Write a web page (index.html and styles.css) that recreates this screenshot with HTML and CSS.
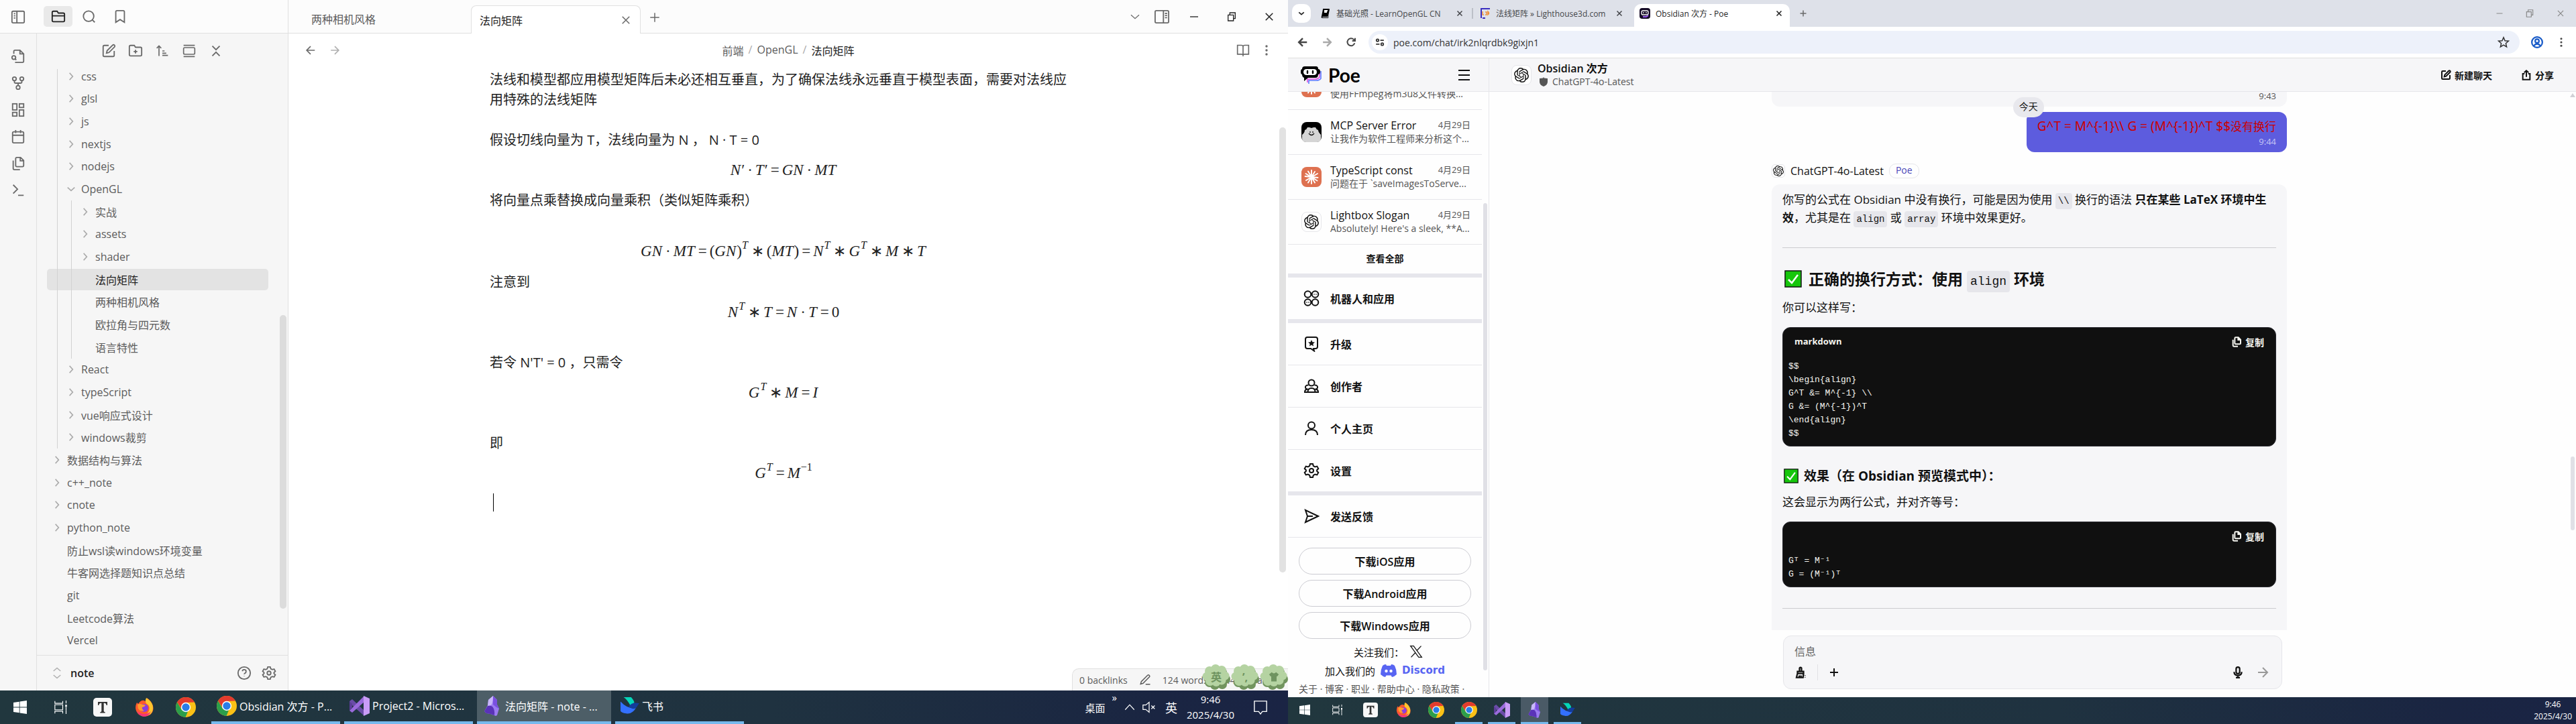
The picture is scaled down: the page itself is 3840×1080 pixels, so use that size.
FILE: index.html
```html
<!DOCTYPE html>
<html lang="zh-CN">
<head>
<meta charset="utf-8">
<title>法向矩阵 - note</title>
<link rel="stylesheet" href="styles.css">
</head>
<body>
<svg class="sprite" aria-hidden="true">
  <symbol id="i-panel-l" viewBox="0 0 24 24"><rect x="2" y="3" width="20" height="19" rx="2"/><path d="M10 3v19M5 7h2.500M5 10.500h2.500M5 14h2.500"/></symbol>
  <symbol id="i-panel-r" viewBox="0 0 24 24"><rect x="1" y="2" width="22" height="20" rx="2"/><path d="M14.500 2v20M17 6.500h3.500M17 10h3.500M17 13.500h3.500"/></symbol>
  <symbol id="i-folder" viewBox="0 0 24 24"><path d="M20 20a2 2 0 0 0 2-2V8a2 2 0 0 0-2-2h-8l-2-3H4a2 2 0 0 0-2 2v13a2 2 0 0 0 2 2ZM2 10.500h20"/></symbol>
  <symbol id="i-search" viewBox="0 0 24 24"><circle cx="11" cy="11" r="8.500"/><path d="m21 21-4-4"/></symbol>
  <symbol id="i-bookmark" viewBox="0 0 24 24"><path d="m19 21-7-4.500L5 21V4a2 2 0 0 1 2-2h10a2 2 0 0 1 2 2Z"/></symbol>
  <symbol id="i-filesearch" viewBox="0 0 24 24"><path d="M5 8V4a2 2 0 0 1 2-2h8l6 6v12a2 2 0 0 1-2 2H7M15 2v6h6"/><circle cx="5" cy="14" r="3"/><path d="m9 18-2-2"/></symbol>
  <symbol id="i-graph" viewBox="0 0 24 24"><circle cx="6" cy="5" r="3"/><circle cx="18" cy="5" r="3"/><circle cx="12" cy="19" r="3"/><path d="M6 8v2q0 2 2 2h8q2 0 2-2V8M12 12v4"/></symbol>
  <symbol id="i-grid" viewBox="0 0 24 24"><rect x="3" y="2" width="7" height="10"/><rect x="14" y="2" width="7" height="6"/><rect x="14" y="12" width="7" height="10"/><rect x="3" y="16" width="7" height="6"/></symbol>
  <symbol id="i-cal" viewBox="0 0 24 24"><rect x="3" y="4" width="18" height="18" rx="2"/><path d="M8 1v5M16 1v5M3 9.500h18"/></symbol>
  <symbol id="i-copy" viewBox="0 0 24 24"><path d="M16 2h-6a2 2 0 0 0-2 2v11a2 2 0 0 0 2 2h9a2 2 0 0 0 2-2V7ZM15.500 2v5.500H21M4 7v13a2 2 0 0 0 2 2h9"/></symbol>
  <symbol id="i-term" viewBox="0 0 24 24"><path d="m4 17 7-7-7-7M12 20h9"/></symbol>
  <symbol id="i-edit" viewBox="0 0 24 24"><path d="M12 3H5a2 2 0 0 0-2 2v14a2 2 0 0 0 2 2h14a2 2 0 0 0 2-2v-7"/><path d="M18.400 2.600a2.100 2.100 0 0 1 3 3L12.500 14.500l-4 1 1-4Z"/></symbol>
  <symbol id="i-foldplus" viewBox="0 0 24 24"><path d="M20 20a2 2 0 0 0 2-2V8a2 2 0 0 0-2-2h-8l-2-3H4a2 2 0 0 0-2 2v13a2 2 0 0 0 2 2ZM12 10v6M9 13h6"/></symbol>
  <symbol id="i-sort" viewBox="0 0 24 24"><path d="m2 7 4-4 4 4M6 3v18M12 12h4M12 16h7M12 20h10"/></symbol>
  <symbol id="i-gallery" viewBox="0 0 24 24"><path d="M2 2h20M2 22h20"/><rect x="2" y="6" width="20" height="12" rx="2"/></symbol>
  <symbol id="i-collapse" viewBox="0 0 24 24"><path d="m6 20 6-6 6 6M6 4l6 6 6-6"/></symbol>
  <symbol id="i-chev" viewBox="0 0 24 24"><path d="m8 3 8 9-8 9"/></symbol>
  <symbol id="i-down" viewBox="0 0 24 24"><path d="m3 8 9 8 9-8"/></symbol>
  <symbol id="i-updown" viewBox="0 0 24 24"><path d="m5 16 7 6 7-6M5 8l7-6 7 6"/></symbol>
  <symbol id="i-help" viewBox="0 0 24 24"><circle cx="12" cy="12" r="10"/><path d="M9 9a3 3 0 0 1 6 1c0 2-3 2.500-3 4M12 17v.500"/></symbol>
  <symbol id="i-gear" viewBox="0 0 24 24"><path d="M10 2h4l.8 3 2.500 1.400 3-.8 2 3.400-2.200 2.200v1.600l2.200 2.200-2 3.400-3-.8-2.500 1.400-.8 3h-4l-.8-3-2.500-1.400-3 .8-2-3.400 2.200-2.200v-1.600L1.700 9l2-3.400 3 .8L9.200 5Z"/><circle cx="12" cy="12" r="3"/></symbol>
  <symbol id="i-left" viewBox="0 0 24 24"><path d="m12 19-7-7 7-7M19.500 12H5"/></symbol>
  <symbol id="i-right" viewBox="0 0 24 24"><path d="m12 5 7 7-7 7M5 12h14"/></symbol>
  <symbol id="i-x" viewBox="0 0 24 24"><path d="M5 5l14 14M19 5 5 19"/></symbol>
  <symbol id="i-plus" viewBox="0 0 24 24"><path d="M12 3v18M3 12h18"/></symbol>
  <symbol id="i-min" viewBox="0 0 24 24"><path d="M3 12h18"/></symbol>
  <symbol id="i-restore" viewBox="0 0 24 24"><path d="M4 8h12v13H4ZM8 8V3h12v13h-4"/></symbol>
  <symbol id="i-book" viewBox="0 0 24 24"><path d="M12 5v16M2 3h7a3 3 0 0 1 3 2 3 3 0 0 1 3-2h7v16h-7a3 3 0 0 0-3 2 3 3 0 0 0-3-2H2Z"/></symbol>
  <symbol id="i-dots" viewBox="0 0 24 24"><g fill="currentColor" stroke="none"><circle cx="12" cy="4" r="2.300"/><circle cx="12" cy="12" r="2.300"/><circle cx="12" cy="20" r="2.300"/></g></symbol>
  <symbol id="i-pencil" viewBox="0 0 24 24"><path d="M13 21h9M17 3a2.500 2.500 0 0 1 3.500 3.500L8 19l-5 1.500L4.500 15.500Z"/></symbol>
  <symbol id="i-win" viewBox="0 0 24 24"><path fill="#fff" stroke="none" d="M0 3.500 10.500 2v9.500H0ZM11.500 1.800 24 0v11.500H11.500ZM0 12.500h10.500V22L0 20.500ZM11.500 12.500H24V24l-12.500-1.800Z"/></symbol>
  <symbol id="i-task" viewBox="0 0 24 24"><path stroke="#fff" fill="none" stroke-width="1.400" d="M1 1v4h14V1M1 7.500h14v9H1ZM1 23v-4h14v4M21 0v5M21 17v7"/><path fill="#fff" stroke="none" d="M19.500 7.500h3v4h-3zM20.300 12h1.400v5h-1.400z"/></symbol>
  <symbol id="i-typora" viewBox="0 0 28 28"><rect x="0" y="0" width="28" height="28" rx="5" fill="#f7f7f7"/><path stroke="none" fill="#333" d="M7 6h14v5h-1.300q-.7-3.200-3-3.200h-1v12q0 1.400 2 1.400V22.500h-7.400v-1.300q2 0 2-1.400v-12h-1q-2.300 0-3 3.200H7Z"/></symbol>
  <symbol id="i-fox" viewBox="0 0 28 28"><path fill="#ff5a2c" d="M3 7q1 1 2 2 4-6 9-5 2 2 5 1Q19 2 18 0q7 5 9 12 2 8-4 13-9 6-17 0Q-2 17 3 7Z"/><path fill="#ffc52e" d="M17 0q7 4 9.500 11 2 9-4 14-6 3-9 1 9-3 8-12-1-4-4-5-3-3-.5-9Z"/><circle cx="14" cy="15" r="6" fill="#8a3ee0"/><path fill="#ff9d2e" d="M4 10q4-2 7 0 3 0 5 1-2 3-5 3-1 3 3 5-6 2-9-3Z"/><path fill="#f4337a" d="M3 19q4 5 11 5 6 0 10-4-3 8-11 8-7-1-10-9Z"/></symbol>
  <symbol id="i-chrome" viewBox="0 0 30 30"><circle cx="15" cy="15" r="15" fill="#fbc116"/><path fill="#e33b2e" d="M2 7.500A15 15 0 0 1 28 7.500L15 8 9 18Z"/><path fill="#2c9e4b" d="M2 7.500 8.700 18.500 18 21.500 14.500 30A15 15 0 0 1 2 7.500Z"/><circle cx="15" cy="15" r="7.200" fill="#fff"/><circle cx="15" cy="15" r="5.700" fill="#2a7de8"/></symbol>
  <symbol id="i-vs" viewBox="0 0 30 30"><path fill="#6a4ca8" d="m0 8 4-3 18 17v8L4 14 0 22Z"/><path fill="#9a6bdc" d="M0 22 22 0v9L4 25Z"/><path fill="#c99cf7" d="m21 0 9 4v22l-9 4Z"/><path fill="#5b3d98" d="M0 8v14l4-4v-6Z"/></symbol>
  <symbol id="i-obs" viewBox="0 0 24 30"><path fill="#9b7af0" d="M13 0 6 6 5 14 0 23l3 3 6 1 8 3 2-1 3-10-3-6V6Z"/><path fill="#c9b8fa" d="M13 0 6 6 5 15q4 0 6-2 2-5 2-13Z"/><path fill="#5a33b8" d="m5 15-5 8 3 3 6 1 6 2q1-8-3-13-3-2-7-1Z"/><path fill="#7a4fe0" d="m13 0 6 6v7l3 6q-5-2-9-6Z"/></symbol>
  <symbol id="i-fei" viewBox="0 0 30 28"><path fill="#05d6b9" d="M5 0h12q5 6 5 9l-6 5Q11 4 5 0Z"/><path fill="#3370ff" d="M0 7q10 11 22 11 2 0 3-1-7 11-16 9Q1 25 0 22Z"/><path fill="#133c9a" d="M13 15q6-8 17-5-2 2-4 6-3 4-8 2Z"/></symbol>
  <symbol id="i-speak" viewBox="0 0 24 24"><path d="M1 8h5l6-5v18l-6-5H1ZM16 9l6 6M22 9l-6 6"/></symbol>
  <symbol id="i-up" viewBox="0 0 24 24"><path d="m3 17 9-10 9 10"/></symbol>
  <symbol id="i-notif" viewBox="0 0 24 24"><path d="M2 2h20v17h-7l-3 4-3-4H2Z"/></symbol>
  <symbol id="i-clover" viewBox="0 0 42 38"><g fill="#71945e"><circle cx="13" cy="13" r="7"/><circle cx="30" cy="12" r="7"/><circle cx="35" cy="22" r="7"/><circle cx="30" cy="30" r="7"/><circle cx="19" cy="31" r="7"/><circle cx="11" cy="27" r="7"/></g><g fill="#b5d3a2"><circle cx="20" cy="7" r="7"/><circle cx="11" cy="10" r="7"/><circle cx="7" cy="18" r="6.500"/><circle cx="12" cy="25" r="7"/><circle cx="21" cy="27" r="6"/><circle cx="29" cy="24" r="6.500"/><circle cx="34" cy="17" r="6.500"/><circle cx="29" cy="9" r="7"/><circle cx="20" cy="17" r="10"/></g></symbol>
  <symbol id="i-gpt" viewBox="0 0 24 24"><path fill="currentColor" stroke="none" d="M22.2819 9.8211a5.9847 5.9847 0 0 0-.5157-4.9108 6.0462 6.0462 0 0 0-6.5098-2.9A6.0651 6.0651 0 0 0 4.9807 4.1818a5.9847 5.9847 0 0 0-3.9977 2.9 6.0462 6.0462 0 0 0 .7427 7.0966 5.98 5.98 0 0 0 .511 4.9107 6.051 6.051 0 0 0 6.5146 2.9001A5.9847 5.9847 0 0 0 13.2599 24a6.0557 6.0557 0 0 0 5.7718-4.2058 5.9894 5.9894 0 0 0 3.9977-2.9001 6.0557 6.0557 0 0 0-.7475-7.0729zm-9.022 12.6081a4.4755 4.4755 0 0 1-2.8764-1.0408l.1419-.0804 4.7783-2.7582a.7948.7948 0 0 0 .3927-.6813v-6.7369l2.02 1.1686a.071.071 0 0 1 .038.052v5.5826a4.504 4.504 0 0 1-4.4945 4.4944zm-9.6607-4.1254a4.4708 4.4708 0 0 1-.5346-3.0137l.142.0852 4.783 2.7582a.7712.7712 0 0 0 .7806 0l5.8428-3.3685v2.3324a.0804.0804 0 0 1-.0332.0615L9.74 19.9502a4.4992 4.4992 0 0 1-6.1408-1.6464zM2.3408 7.8956a4.485 4.485 0 0 1 2.3655-1.9728V11.6a.7664.7664 0 0 0 .3879.6765l5.8144 3.3543-2.0201 1.1685a.0757.0757 0 0 1-.071 0l-4.8303-2.7865A4.504 4.504 0 0 1 2.3408 7.872zm16.5963 3.8558L13.1038 8.364 15.1192 7.2a.0757.0757 0 0 1 .071 0l4.8303 2.7913a4.4944 4.4944 0 0 1-.6765 8.1042v-5.6772a.79.79 0 0 0-.407-.667zm2.0107-3.0231l-.142-.0852-4.7735-2.7818a.7759.7759 0 0 0-.7854 0L9.409 9.2297V6.8974a.0662.0662 0 0 1 .0284-.0615l4.8303-2.7866a4.4992 4.4992 0 0 1 6.6802 4.66zM8.3065 12.863l-2.02-1.1638a.0804.0804 0 0 1-.038-.0567V6.0742a4.4992 4.4992 0 0 1 7.3757-3.4537l-.142.0805L8.704 5.459a.7948.7948 0 0 0-.3927.6813zm1.0976-2.3654l2.602-1.4998 2.6069 1.4998v2.9994l-2.5974 1.4997-2.6067-1.4997Z"/></symbol>
  <symbol id="i-claude" viewBox="0 0 30 30"><rect width="30" height="30" rx="8" fill="#de7150"/><path stroke="#fff" stroke-width="1.900" stroke-linecap="round" d="M15 5v20M5.500 14l19 2M10 6.500l10 17M20 7l-10 16.500M6.500 10l17 10.500M24 10 7 20"/></symbol>
  <symbol id="i-face" viewBox="0 0 30 30"><rect width="30" height="30" rx="8" fill="#000"/><path fill="#d4d4d4" d="M5 12q3-1 4-4h3l3 1 3-1h3q1 3 4 4 0 3 4 7v5q0 6-6 6H7q-6 0-6-6v-5q4-3 4-7Z"/><path stroke="#111" fill="none" stroke-width="1.300" d="M13 14v2M17 14v2M11 17q4 5 8 0"/></symbol>
  <symbol id="i-bots" viewBox="0 0 24 24"><circle cx="6.500" cy="6" r="4.800"/><circle cx="17.500" cy="6" r="4.800"/><circle cx="6.500" cy="18" r="4.800"/><circle cx="17.500" cy="18" r="4.800"/><path d="M16 5.500v1M19 5.500v1M5 17.500v1M8 17.500v1"/></symbol>
  <symbol id="i-star-b" viewBox="0 0 24 24"><path d="M6 2h12q3 0 3 3v11q0 3-3 3h-3l1 3.500L11 19H6q-3 0-3-3V5q0-3 3-3Z"/><path fill="currentColor" stroke="none" d="m12 6 1.500 3.300 3.500.3-2.700 2.400.8 3.500-3.100-1.900-3.100 1.900.8-3.500L7 9.600l3.500-.3Z"/></symbol>
  <symbol id="i-creators" viewBox="0 0 24 24"><circle cx="12" cy="7" r="4.500"/><path d="M7.500 11a3 3 0 1 0-1 5.500M16.500 11a3 3 0 1 1 1 5.500M2 21q0-4.500 4.500-4.500M22 21q0-4.500-4.500-4.500M6.500 21q0-6 5.500-6t5.500 6M1 21h22"/></symbol>
  <symbol id="i-user" viewBox="0 0 24 24"><circle cx="12" cy="7.500" r="5"/><path d="M3 22q0-8 9-8t9 8"/></symbol>
  <symbol id="i-send" viewBox="0 0 24 24"><path d="m3 3 19 9-19 9 3-9ZM6 12h8"/></symbol>
  <symbol id="i-brush" viewBox="0 0 24 24"><path d="M10 10V4q0-2 2-2t2 2v6M6 10h12v4H6ZM6 14l-2 8h13l1-8M9 22l1-4M13 22v-4M21 18v1M21 22v.5"/></symbol>
  <symbol id="i-mic" viewBox="0 0 24 24"><rect x="8.500" y="1.500" width="7" height="13" rx="3.500"/><path d="M4.500 11q0 7 7.500 7t7.500-7M12 18v4M8 22.500h8"/></symbol>
  <symbol id="i-share" viewBox="0 0 24 24"><path d="M8 9H4v13h16V9h-4M12 16V2M7 6.500 12 2l5 4.500"/></symbol>
  <symbol id="i-star" viewBox="0 0 24 24"><path d="m12 2.500 2.800 6.500 7 .6-5.300 4.700 1.600 6.900L12 17.500l-6.100 3.700 1.600-6.900L2.200 9.600l7-.6Z"/></symbol>
  <symbol id="i-prof" viewBox="0 0 24 24"><circle cx="12" cy="12" r="10.500"/><circle cx="12" cy="9.500" r="3.800"/><path d="M5 19.500q3-4 7-4t7 4"/></symbol>
  <symbol id="i-reload" viewBox="0 0 24 24"><path d="M20 14a8.300 8.300 0 1 1-2-8.200L21 9M21 2.500V9h-6.500"/></symbol>
  <symbol id="i-tune" viewBox="0 0 24 24"><circle cx="6" cy="7" r="3"/><circle cx="18" cy="17" r="3"/><path d="M13 7h9M2 17h9"/></symbol>
  <symbol id="i-check" viewBox="0 0 26 26"><rect x="1" y="1" width="24" height="24" fill="#16c60c" stroke="#111" stroke-width="1.500"/><path fill="none" stroke="#fff" stroke-width="2.500" d="m6 14 5 5 9-12"/></symbol>
  <symbol id="i-poe" viewBox="0 0 32 28"><path d="M12 27v-5h11q5 0 7-3V8" fill="none" stroke="#5d7cff" stroke-width="1.600"/><path d="M10 25v-5h11q5 0 7-3V7" fill="none" stroke="#e34fe0" stroke-width="1.600"/><path fill="#000" d="M6 1h17q3 0 3 4 3 0 3 4t-3 4q0 5-4 5H11l-6 5v-5q-3-1-3-5-2 0-2-4t2-4q0-4 4-4Z"/><rect x="4" y="5" width="20" height="9" rx="4.500" fill="#fff"/><path d="M10 8v3M18 8v3" stroke="#000" stroke-width="2.400" stroke-linecap="round"/></symbol>
  <symbol id="i-discord" viewBox="0 0 24 20"><path fill="#5865f2" d="M8 1Q5 1 3 3 0 9 0 16q3 3 7 4l1.500-2.500h7L17 20q4-1 7-4 0-7-3-13-2-2-5-2l-1 2H9Z"/><circle cx="8.500" cy="11" r="2.200" fill="#fff"/><circle cx="15.500" cy="11" r="2.200" fill="#fff"/></symbol>
  <symbol id="i-xlogo" viewBox="0 0 24 24"><path d="M2 2h5.500L22 22h-5.500ZM21 2l-8 8.500M3 22l8-8.500"/></symbol>
  <symbol id="i-tri" viewBox="0 0 8 8"><path fill="#d0d0d6" stroke="none" d="m4 1 4 6H0Z"/></symbol>
</svg>

<main class="screens">
<section class="screen">
  <div class="obsidian">
    <header class="o-top">
      <div class="o-top-left">
        <button class="ib" aria-label="侧边栏"><svg class="s22"><use href="#i-panel-l"/></svg></button>
        <div class="o-modes">
          <button class="mode on" aria-label="文件"><svg class="s22"><use href="#i-folder"/></svg></button>
          <button class="mode" aria-label="搜索"><svg class="s22"><use href="#i-search"/></svg></button>
          <button class="mode" aria-label="书签"><svg class="s22"><use href="#i-bookmark"/></svg></button>
        </div>
      </div>
      <div class="o-tabs">
        <button class="o-tab">两种相机风格</button>
        <div class="o-tab on"><span>法向矩阵</span><button class="ib" aria-label="关闭"><svg class="s18"><use href="#i-x"/></svg></button></div>
        <button class="ib o-new" aria-label="新标签页"><svg class="s18"><use href="#i-plus"/></svg></button>
      </div>
      <div class="o-win">
        <button class="ib w40" aria-label="标签列表"><svg class="s16"><use href="#i-down"/></svg></button>
        <button class="ib w40" aria-label="右侧栏"><svg class="s22"><use href="#i-panel-r"/></svg></button>
        <button class="ib w56 dark" aria-label="最小化"><svg class="s16"><use href="#i-min"/></svg></button>
        <button class="ib w56 dark" aria-label="还原"><svg class="s16"><use href="#i-restore"/></svg></button>
        <button class="ib w56 dark" aria-label="关闭窗口"><svg class="s18"><use href="#i-x"/></svg></button>
      </div>
    </header>
    <div class="o-body">
      <nav class="ribbon">
        <button class="ib" aria-label="快速切换"><svg class="s22"><use href="#i-filesearch"/></svg></button>
        <button class="ib" aria-label="关系图谱"><svg class="s22"><use href="#i-graph"/></svg></button>
        <button class="ib" aria-label="白板"><svg class="s22"><use href="#i-grid"/></svg></button>
        <button class="ib" aria-label="日记"><svg class="s22"><use href="#i-cal"/></svg></button>
        <button class="ib" aria-label="模板"><svg class="s22"><use href="#i-copy"/></svg></button>
        <button class="ib" aria-label="命令"><svg class="s22"><use href="#i-term"/></svg></button>
      </nav>
      <aside class="files">
        <div class="f-tools">
          <button class="ib w40" aria-label="新建笔记"><svg class="s22"><use href="#i-edit"/></svg></button>
          <button class="ib w40" aria-label="新建文件夹"><svg class="s22"><use href="#i-foldplus"/></svg></button>
          <button class="ib w40" aria-label="排序"><svg class="s20"><use href="#i-sort"/></svg></button>
          <button class="ib w40" aria-label="自动定位"><svg class="s20"><use href="#i-gallery"/></svg></button>
          <button class="ib w40" aria-label="折叠"><svg class="s22"><use href="#i-collapse"/></svg></button>
        </div>
        <div class="tree">
          <div class="group g17">
            <a class="row l1" href="#"><svg class="s14"><use href="#i-chev"/></svg>css</a>
            <a class="row l1" href="#"><svg class="s14"><use href="#i-chev"/></svg>glsl</a>
            <a class="row l1" href="#"><svg class="s14"><use href="#i-chev"/></svg>js</a>
            <a class="row l1" href="#"><svg class="s14"><use href="#i-chev"/></svg>nextjs</a>
            <a class="row l1" href="#"><svg class="s14"><use href="#i-chev"/></svg>nodejs</a>
            <a class="row l1" href="#"><svg class="s14"><use href="#i-down"/></svg>OpenGL</a>
            <div class="group g7">
              <a class="row l2" href="#"><svg class="s14"><use href="#i-chev"/></svg>实战</a>
              <a class="row l2" href="#"><svg class="s14"><use href="#i-chev"/></svg>assets</a>
              <a class="row l2" href="#"><svg class="s14"><use href="#i-chev"/></svg>shader</a>
              <a class="row l2 leaf on" href="#">法向矩阵</a>
              <a class="row l2 leaf" href="#">两种相机风格</a>
              <a class="row l2 leaf" href="#">欧拉角与四元数</a>
              <a class="row l2 leaf" href="#">语言特性</a>
            </div>
            <a class="row l1" href="#"><svg class="s14"><use href="#i-chev"/></svg>React</a>
            <a class="row l1" href="#"><svg class="s14"><use href="#i-chev"/></svg>typeScript</a>
            <a class="row l1" href="#"><svg class="s14"><use href="#i-chev"/></svg>vue响应式设计</a>
            <a class="row l1" href="#"><svg class="s14"><use href="#i-chev"/></svg>windows裁剪</a>
          </div>
          <a class="row" href="#"><svg class="s14"><use href="#i-chev"/></svg>数据结构与算法</a>
          <a class="row" href="#"><svg class="s14"><use href="#i-chev"/></svg>c++_note</a>
          <a class="row" href="#"><svg class="s14"><use href="#i-chev"/></svg>cnote</a>
          <a class="row" href="#"><svg class="s14"><use href="#i-chev"/></svg>python_note</a>
          <a class="row leaf" href="#">防止wsl读windows环境变量</a>
          <a class="row leaf" href="#">牛客网选择题知识点总结</a>
          <a class="row leaf" href="#">git</a>
          <a class="row leaf" href="#">Leetcode算法</a>
          <a class="row leaf" href="#">Vercel</a>
          <span class="thumb f-thumb"></span>
        </div>
        <div class="vault">
          <svg class="s18 pale"><use href="#i-updown"/></svg>
          <button class="vault-name">note</button>
          <button class="ib" aria-label="帮助"><svg class="s22"><use href="#i-help"/></svg></button>
          <button class="ib" aria-label="设置"><svg class="s22"><use href="#i-gear"/></svg></button>
        </div>
      </aside>
      <section class="editor">
        <div class="e-head">
          <div class="e-nav">
            <button class="ib" aria-label="后退"><svg class="s20"><use href="#i-left"/></svg></button>
            <button class="ib pale" aria-label="前进"><svg class="s20"><use href="#i-right"/></svg></button>
          </div>
          <div class="crumbs"><a href="#">前端</a><span>/</span><a href="#">OpenGL</a><span>/</span><b>法向矩阵</b></div>
          <div class="e-nav end">
            <button class="ib" aria-label="阅读视图"><svg class="s20"><use href="#i-book"/></svg></button>
            <button class="ib" aria-label="更多"><svg class="s18"><use href="#i-dots"/></svg></button>
          </div>
        </div>
        <article class="note">
          <p>法线和模型都应用模型矩阵后未必还相互垂直，为了确保法线永远垂直于模型表面，需要对法线应用特殊的法线矩阵</p>
          <p class="gap">假设切线向量为 T，法线向量为 N ， N · T = 0</p>
          <div class="eq"><i>N</i>′<s>·</s><i>T</i>′<s>=</s><i>GN</i><s>·</s><i>MT</i></div>
          <p>将向量点乘替换成向量乘积（类似矩阵乘积）</p>
          <div class="eq gap">
            <i>GN</i><s>·</s><i>MT</i><s>=</s>(<i>GN</i>)<sup><i>T</i></sup><s>∗</s>(<i>MT</i>)<s>=</s><i>N</i><sup><i>T</i></sup><s>∗</s><i>G</i><sup><i>T</i></sup><s>∗</s><i>M</i><s>∗</s><i>T</i></div>
          <p>注意到</p>
          <div class="eq"><i>N</i><sup><i>T</i></sup><s>∗</s><i>T</i><s>=</s><i>N</i><s>·</s><i>T</i><s>=</s>0</div>
          <p class="gap">若令 N'T' = 0 ，只需令</p>
          <div class="eq"><i>G</i><sup><i>T</i></sup><s>∗</s><i>M</i><s>=</s><i>I</i></div>
          <p class="gap">即</p>
          <div class="eq"><i>G</i><sup><i>T</i></sup><s>=</s><i>M</i><sup>−1</sup></div>
          <div class="caret"></div>
        </article>
        <span class="thumb e-thumb"></span>
        <div class="status">
          <span>0 backlinks</span><svg class="s18"><use href="#i-pencil"/></svg><span>124 words</span><span>244 characters</span>
        </div>
        <div class="clovers">
          <span class="clover"><svg><use href="#i-clover"/></svg><b>英</b></span>
          <span class="clover"><svg><use href="#i-clover"/></svg><b>’,</b></span>
          <span class="clover"><svg><use href="#i-clover"/></svg><svg class="shirt" viewBox="0 0 20 20"><path d="m1 5 5-4q4 4 8 0l5 4-3 4-1-1v10H5V8L4 9Z"/></svg></span>
        </div>
      </section>
    </div>
  </div>
  <footer class="taskbar big">
    <button class="tb" aria-label="开始"><svg class="s20"><use href="#i-win"/></svg></button>
    <button class="tb" aria-label="任务视图"><svg class="s20"><use href="#i-task"/></svg></button>
    <button class="tb" aria-label="Typora"><svg class="s28"><use href="#i-typora"/></svg></button>
    <button class="tb" aria-label="Firefox"><svg class="s28"><use href="#i-fox"/></svg></button>
    <button class="tb" aria-label="Chrome"><svg class="s30"><use href="#i-chrome"/></svg></button>
    <div class="apps">
      <button class="app"><svg class="s30"><use href="#i-chrome"/></svg><span>Obsidian 次方 - P...</span></button>
      <button class="app"><svg class="s30"><use href="#i-vs"/></svg><span>Project2 - Micros...</span></button>
      <button class="app on"><svg class="s30"><use href="#i-obs"/></svg><span>法向矩阵 - note - ...</span></button>
      <button class="app"><svg class="s28"><use href="#i-fei"/></svg><span>飞书</span></button>
    </div>
    <div class="tray">
      <span>桌面</span><span class="more">»</span>
      <svg class="s18"><use href="#i-up"/></svg>
      <svg class="s20"><use href="#i-speak"/></svg>
      <span class="ime">英</span>
      <time>9:46<br>2025/4/30</time>
      <svg class="s22"><use href="#i-notif"/></svg>
    </div>
  </footer>
</section>

<section class="screen">
  <div class="chrome">
    <div class="c-tabs">
      <button class="c-find" aria-label="搜索标签页"><svg class="s10"><use href="#i-down"/></svg></button>
      <div class="c-tab"><svg class="s16 solid" viewBox="0 0 16 16"><path d="M4 1h9q1 0 1 1l-2 10q0 1-1 1H4q-1 0-1 1h9l1-3v1l-1 3H3q-2 0-1-3L4 2q0-1 0-1Z"/><path stroke="#fff" d="M6 4h5M6 6h4"/></svg><span>基础光照 - LearnOpenGL CN</span><svg class="s14 tight"><use href="#i-x"/></svg></div>
      <i class="c-sep"></i>
      <div class="c-tab"><svg class="s16" viewBox="0 0 16 16"><path stroke="#3b2fc0" stroke-width="2" fill="none" d="M2 15V1h13M4 15h4"/><path stroke="#f0923c" stroke-width="1.500" fill="none" d="M4 5v5h2M8 6h2v4H8M12 5q3 3 0 5Z"/></svg><span>法线矩阵 » Lighthouse3d.com</span><svg class="s14 tight"><use href="#i-x"/></svg></div>
      <i class="c-sep off"></i>
      <div class="c-tab on"><svg class="s16 plain" viewBox="0 0 16 16"><rect width="16" height="16" rx="4" fill="#150a26"/><rect x="3" y="4" width="10" height="6" rx="2" fill="none" stroke="#fff" stroke-width="1.300"/><path stroke="#fff" stroke-width="1.200" d="M6 6v2M10 6v2"/><path d="M5 13h5l3-2" stroke="#9a5cf0" fill="none"/></svg><span>Obsidian 次方 - Poe</span><svg class="s14 tight"><use href="#i-x"/></svg></div>
      <button class="ib c-new" aria-label="新标签页"><svg class="s14 tight"><use href="#i-plus"/></svg></button>
      <div class="c-win"><svg class="s12"><use href="#i-min"/></svg><svg class="s14"><use href="#i-restore"/></svg><svg class="s14"><use href="#i-x"/></svg></div>
    </div>
    <div class="c-bar">
      <button class="ib" aria-label="后退"><svg class="s20 heavy"><use href="#i-left"/></svg></button>
      <button class="ib pale" aria-label="前进"><svg class="s20 heavy"><use href="#i-right"/></svg></button>
      <button class="ib" aria-label="刷新"><svg class="s16 heavy"><use href="#i-reload"/></svg></button>
      <label class="omni"><span class="site"><svg class="s14 heavy"><use href="#i-tune"/></svg></span><input type="text" aria-label="地址" value="poe.com/chat/irk2nlqrdbk9gixjn1"><svg class="s18"><use href="#i-star"/></svg></label>
      <button class="ib blue" aria-label="用户"><svg class="s18 heavy"><use href="#i-prof"/></svg></button>
      <button class="ib" aria-label="菜单"><svg class="s16"><use href="#i-dots"/></svg></button>
    </div>
    <div class="poe">
      <aside class="p-side">
        <header class="p-logo"><svg class="poe-mark"><use href="#i-poe"/></svg><b>Poe</b><button class="burger" aria-label="菜单"><i></i><i></i><i></i></button></header>
        <div class="p-scroll">
          <div class="p-list">
            <a class="chat cut" href="#"><svg class="s30"><use href="#i-claude"/></svg><span class="ct"><span class="c2">使用FFmpeg将m3u8文件转换...</span></span></a>
            <a class="chat" href="#"><svg class="s30"><use href="#i-face"/></svg><span class="ct"><span class="c1"><b>MCP Server Error</b><time>4月29日</time></span><span class="c2">让我作为软件工程师来分析这个...</span></span></a>
            <a class="chat" href="#"><svg class="s30"><use href="#i-claude"/></svg><span class="ct"><span class="c1"><b>TypeScript const</b><time>4月29日</time></span><span class="c2">问题在于 `saveImagesToServe...</span></span></a>
            <a class="chat" href="#"><span class="av"><svg class="s22"><use href="#i-gpt"/></svg></span><span class="ct"><span class="c1"><b>Lightbox Slogan</b><time>4月29日</time></span><span class="c2">Absolutely! Here's a sleek, **A...</span></span></a>
            <a class="all" href="#">查看全部</a>
            <a class="nav thick" href="#"><svg class="s24"><use href="#i-bots"/></svg>机器人和应用</a>
            <a class="nav thick" href="#"><svg class="s24"><use href="#i-star-b"/></svg>升级</a>
            <a class="nav" href="#"><svg class="s24"><use href="#i-creators"/></svg>创作者</a>
            <a class="nav" href="#"><svg class="s24"><use href="#i-user"/></svg>个人主页</a>
            <a class="nav" href="#"><svg class="s24"><use href="#i-gear"/></svg>设置</a>
            <a class="nav thick" href="#"><svg class="s24"><use href="#i-send"/></svg>发送反馈</a>
            <div class="dl">
              <button>下载iOS应用</button><button>下载Android应用</button><button>下载Windows应用</button>
            </div>
            <div class="social"><span>关注我们：</span><svg class="s20"><use href="#i-xlogo"/></svg></div>
            <div class="social dc"><span>加入我们的</span><svg class="dc-mark"><use href="#i-discord"/></svg><b>Discord</b></div>
            <div class="links"><a href="#">关于</a> · <a href="#">博客</a> · <a href="#">职业</a> · <a href="#">帮助中心</a> · <a href="#">隐私政策</a> ·</div>
          </div>
          <span class="thumb p-thumb"></span>
        </div>
      </aside>
      <section class="p-main">
        <header class="p-head">
          <span class="av"><svg class="s22"><use href="#i-gpt"/></svg></span>
          <div class="p-title"><b>Obsidian 次方</b><span><svg class="shield" viewBox="0 0 14 14"><path d="m7 0 1 1.500L13 2v5q0 5-6 7Q1 12 1 7V2l5-.5Z"/></svg>ChatGPT-4o-Latest</span></div>
          <button class="act"><svg class="s16 heavy"><use href="#i-edit"/></svg>新建聊天</button>
          <button class="act"><svg class="s16 heavy"><use href="#i-share"/></svg>分享</button>
        </header>
        <div class="thread">
          <div class="col">
            <div class="prev">9:43</div>
            <div class="mine"><span class="today">今天</span><span class="tex">G^T = M^{-1}\\ G = (M^{-1})^T $$<span>没有换行</span></span><time>9:44</time></div>
            <div class="bot"><span class="av sm"><svg class="s16"><use href="#i-gpt"/></svg></span><span>ChatGPT-4o-Latest</span><span class="badge">Poe</span></div>
            <div class="answer">
              <p>你写的公式在 Obsidian 中没有换行，可能是因为使用 <code>\\</code> 换行的语法 <b>只在某些 LaTeX 环境中生效</b>，尤其是在 <code>align</code> 或 <code>array</code> 环境中效果更好。</p>
              <hr>
              <h2><svg><use href="#i-check"/></svg><span>正确的换行方式：使用 <code>align</code> 环境</span></h2>
              <p>你可以这样写：</p>
              <div class="code"><div class="code-h"><b>markdown</b><button><svg class="s16 heavy"><use href="#i-copy"/></svg>复制</button></div><pre>$$
\begin{align}
G^T &amp;= M^{-1} \\
G &amp;= (M^{-1})^T
\end{align}
$$</pre></div>
              <h3><svg><use href="#i-check"/></svg><span>效果（在 Obsidian 预览模式中）：</span></h3>
              <p>这会显示为两行公式，并对齐等号：</p>
              <div class="code"><div class="code-h"><b></b><button><svg class="s16 heavy"><use href="#i-copy"/></svg>复制</button></div><pre>Gᵀ = M⁻¹
G = (M⁻¹)ᵀ</pre></div>
              <hr>
            </div>
          </div>
          <svg class="arrow"><use href="#i-tri"/></svg>
          <span class="thumb t-thumb"></span>
        </div>
        <form class="composer">
          <textarea rows="1" placeholder="信息" aria-label="信息"></textarea>
          <div class="c-tools">
            <button type="button" class="ib" aria-label="清除"><svg class="s18 heavy"><use href="#i-brush"/></svg></button><i></i>
            <button type="button" class="ib" aria-label="添加"><svg class="s16 heavy"><use href="#i-plus"/></svg></button>
            <button type="button" class="ib push" aria-label="语音"><svg class="s18 heavy"><use href="#i-mic"/></svg></button>
            <button type="button" class="ib pale" aria-label="发送"><svg class="s24"><use href="#i-right"/></svg></button>
          </div>
        </form>
      </section>
    </div>
  </div>
  <footer class="taskbar small">
    <button class="tb" aria-label="开始"><svg class="s16"><use href="#i-win"/></svg></button>
    <button class="tb" aria-label="任务视图"><svg class="s16"><use href="#i-task"/></svg></button>
    <button class="tb" aria-label="Typora"><svg class="s22"><use href="#i-typora"/></svg></button>
    <button class="tb" aria-label="Firefox"><svg class="s22"><use href="#i-fox"/></svg></button>
    <button class="tb" aria-label="Chrome"><svg class="s24"><use href="#i-chrome"/></svg></button>
    <button class="tb run" aria-label="Chrome"><svg class="s24"><use href="#i-chrome"/></svg></button>
    <button class="tb run" aria-label="Visual Studio"><svg class="s24"><use href="#i-vs"/></svg></button>
    <button class="tb run on" aria-label="Obsidian"><svg class="s24"><use href="#i-obs"/></svg></button>
    <button class="tb run" aria-label="飞书"><svg class="s22"><use href="#i-fei"/></svg></button>
    <time>9:46<br>2025/4/30</time>
  </footer>
</section>
</main>
</body>
</html>
```
FILE: styles.css
```css
* { box-sizing: border-box; }
body {
  margin: 0;
  font-family: "Open Sans", "Noto Sans CJK SC", sans-serif;
  font-size: 16px;
  color: #222;
  background: #fff;
}
button, input, textarea { font: inherit; color: inherit; background: none; border: 0; padding: 0; margin: 0; }
a { color: inherit; text-decoration: none; }
p, h2, h3, pre { margin: 0; }
svg { fill: none; stroke: currentColor; stroke-width: 2; flex: none; display: block; }
.sprite { position: absolute; width: 0; height: 0; }
.s10 { width: 10px; height: 10px; stroke-width: 4; }
.s12 { width: 12px; height: 12px; }
.s14 { width: 14px; height: 14px; }
.s16 { width: 16px; height: 16px; }
.s18 { width: 18px; height: 18px; }
.s20 { width: 20px; height: 20px; }
.s22 { width: 22px; height: 22px; }
.s24 { width: 24px; height: 24px; }
.s28 { width: 28px; height: 28px; }
.s30 { width: 30px; height: 30px; }
.heavy { stroke-width: 3; }
.tight { stroke-width: 3; padding: 1px; }
.solid { fill: #000; stroke: none; }
.plain { stroke: none; }
.ib { display: flex; align-items: center; justify-content: center; color: #6a6a6a; }
.pale, .ib.pale { color: #b0b0b0; }
.w40 { width: 40px; }
.w56 { width: 56px; }
.dark { color: #222; }
.thumb { position: absolute; border-radius: 6px; background: #e2e2e2; }

.screens { display: flex; height: 100vh; min-height: 1080px; }
.screen { flex: 1 1 50%; min-width: 0; display: flex; flex-direction: column; overflow: hidden; }

/* Obsidian */
.obsidian { flex: 1; min-height: 0; display: flex; flex-direction: column; }
.o-top { height: 50px; display: flex; background: #fcfcfc; border-bottom: 1px solid #e0e0e0; }
.o-top-left { width: 430px; padding-left: 16px; display: flex; align-items: center; border-right: 1px solid #e0e0e0; }
.o-modes { display: flex; gap: 3px; padding-left: 27px; }
.mode { width: 43px; height: 31px; border-radius: 5px; display: flex; align-items: center; justify-content: center; color: #6a6a6a; }
.mode.on { background: #e9e9e9; color: #222; }
.o-tabs { flex: 1; display: flex; align-items: flex-end; padding-left: 22px; }
.o-tab { width: 250px; height: 42px; padding: 0 12px; display: flex; align-items: center; justify-content: space-between; color: #5c5c5c; }
.o-tab.on { width: 253px; margin-bottom: -1px; background: #fff; border: 1px solid #e0e0e0; border-bottom: 0; border-radius: 8px 8px 0 0; color: #222; }
.o-new { height: 46px; padding-left: 12px; }
.o-win { display: flex; }

.o-body { flex: 1; min-height: 0; display: flex; }
.ribbon { width: 55px; padding-top: 12px; background: #f6f6f6; border-right: 1px solid #e0e0e0; display: flex; flex-direction: column; }
.ribbon .ib { height: 40px; padding-top: 4px; }
.files { width: 375px; background: #f6f6f6; border-right: 1px solid #e0e0e0; display: flex; flex-direction: column; }
.f-tools { height: 47px; padding-top: 5px; display: flex; justify-content: center; }
.tree { flex: 1; min-height: 0; position: relative; isolation: isolate; display: flex; flex-direction: column; margin-bottom: 5px; }
.group { display: flex; flex-direction: column; position: relative; }
.g17 { flex: 17 1 0; }
.g7 { flex: 7 1 0; }
.group::before { content: ""; position: absolute; z-index: 1; left: 30px; top: 6px; bottom: 0; width: 1px; background: #d2d2d2; }
.group .group::before { left: 51px; top: 0; }
.row { flex: 1 1 0; min-height: 0; position: relative; display: flex; align-items: center; gap: 8px; margin: 0 29px 0 15px; padding-left: 8px; color: #5c5c5c; white-space: nowrap; }
.row svg { color: #ababab; stroke-width: 3; }
.row.leaf { padding-left: 30px; }
.row.l1 { padding-left: 29px; }
.row.l2 { padding-left: 50px; }
.row.l2.leaf { padding-left: 72px; }
.row.on { color: #222; }
.row.on::before { content: ""; position: absolute; z-index: -1; inset: 1px 0; border-radius: 5px; background: #e3e3e3; }
.f-thumb { right: 2px; width: 10px; top: 373px; bottom: 64px; background: #dcdcdc; }
.vault { height: 53px; border-top: 1px solid #e0e0e0; display: flex; align-items: center; gap: 15px; padding: 0 17px 0 21px; }
.vault-name { flex: 1; text-align: left; font-weight: 600; margin-left: -4px; }

.editor { flex: 1; min-width: 0; position: relative; background: #fff; }
.e-head { height: 50px; display: grid; grid-template-columns: 1fr auto 1fr; align-items: center; padding: 0 23px; }
.e-nav { display: flex; gap: 16px; }
.e-nav.end { justify-content: flex-end; }
.crumbs { display: flex; gap: 7px; color: #5c5c5c; }
.crumbs span { color: #ababab; }
.crumbs b { font-weight: 400; color: #222; }
.note { max-width: 890px; margin: 0 auto; padding: 4px 14px 0 0; font-size: 20px; line-height: 30px; }
.gap { margin-top: 30px; }
.eq { height: 60px; display: flex; align-items: center; justify-content: center; font-family: "Liberation Serif", serif; font-size: 23px; line-height: 60px; }
.eq.gap { height: 62px; }
.eq i { padding-right: 1px; }
.eq s { text-decoration: none; padding: 0 4px; }
.eq sup { font-size: 16px; line-height: 16px; padding-bottom: 18px; }
.caret { width: 1px; height: 27px; margin-left: 5px; background: #000; }
.e-thumb { right: 3px; width: 10px; top: 140px; bottom: 176px; }
.status { position: absolute; right: 0; bottom: 0; width: 322px; height: 33px; overflow: hidden; display: flex; align-items: center; gap: 17px; padding-left: 10px; border: 1px solid #e0e0e0; border-width: 1px 0 0 1px; border-radius: 10px 0 0 0; background: #f6f6f6; color: #5c5c5c; font-size: 14px; white-space: nowrap; }
.clovers { position: absolute; right: 0; bottom: 1px; display: flex; gap: 1px; }
.clover { width: 42px; height: 38px; display: grid; place-items: center; color: #6f9460; }
.clover > * { grid-area: 1 / 1; }
.clover svg { width: 42px; height: 38px; stroke: none; }
.clover b { font-size: 16px; line-height: 20px; }
.clover svg.shirt { width: 16px; height: 16px; fill: #6f9460; }

/* Taskbar */
.taskbar { display: flex; color: #fff; background: linear-gradient(90deg, #21373e 0, #1f3240 60%, #1a2542 90%, #1a2444 100%); }
.taskbar.big { height: 50px; }
.tb { display: flex; align-items: center; justify-content: center; width: 62px; }
.tb svg, .app svg { stroke: none; }
.big .tb:first-child { width: 60px; }
.apps { display: flex; gap: 6px; padding-left: 7px; }
.app { width: 192px; padding: 0 8px; display: flex; align-items: center; gap: 4px; border-bottom: 4px solid #76b9ed; font-size: 16px; white-space: nowrap; overflow: hidden; }
.app.on { width: 200px; background: #4d5e67; }
.tray { margin-left: auto; display: flex; align-items: center; gap: 10px; padding-right: 30px; font-size: 15px; }
.tray svg { stroke-width: 1.5; }
.tray .more { align-self: flex-start; }
.ime { font-size: 18px; padding: 0 4px; }
.tray time { text-align: center; line-height: 23px; padding-right: 18px; }
.taskbar.small { height: 40px; }
.small .tb { width: 49px; border-bottom: 3px solid transparent; }
.small .tb.run { border-color: #76b9ed; width: 41px; margin: 0 4px; }
.small .tb.on { background: #4a5a66; }
.small time { margin-left: auto; padding-right: 6px; font-size: 12px; line-height: 18px; text-align: center; align-self: center; }

/* Browser */
.chrome { flex: 1; min-height: 0; display: flex; flex-direction: column; }
.c-tabs { height: 40px; padding: 6px 16px 0 6px; display: flex; background: #dee1e9; font-size: 12px; color: #45474a; }
.c-find { width: 28px; height: 28px; margin-right: 6px; border-radius: 10px; background: #fff; display: grid; place-items: center; color: #222; }
.c-tab { width: 232px; height: 28px; padding: 0 9px 0 8px; display: flex; align-items: center; gap: 8px; white-space: nowrap; }
.c-tab span { flex: 1; }
.c-tab.on { height: 34px; padding-bottom: 6px; background: #fff; border-radius: 10px 10px 0 0; color: #1f1f1f; }
.c-sep { width: 2px; height: 16px; margin: 6px 2px; background: #bcc0c8; }
.c-sep.off { background: none; }
.c-new { width: 40px; height: 28px; }
.c-win { margin-left: auto; display: flex; gap: 32px; height: 28px; align-items: center; color: #888; }
.c-bar { height: 47px; padding: 0 12px; display: flex; align-items: center; gap: 16px; background: #fff; border-bottom: 1px solid #dedede; }
.c-bar .ib { width: 20px; color: #474747; }
.c-bar .ib.pale { color: #aaa; }
.c-bar .ib.blue { color: #1a5cc8; }
.omni { flex: 1; height: 34px; border-radius: 17px; background: #edf1fa; display: flex; align-items: center; gap: 8px; padding: 0 15px 0 5px; color: #333; }
.site { width: 24px; height: 24px; border-radius: 12px; background: #fff; display: grid; place-items: center; }
.omni input { flex: 1; font-size: 14px; outline: 0; }

/* Poe */
.poe { flex: 1; min-height: 0; display: flex; background: #fefefe; color: #111; }
.p-side { width: 300px; border-right: 1px solid #e6e6ea; display: flex; flex-direction: column; }
.p-logo { height: 50px; flex: none; padding: 0 28px 0 19px; display: flex; align-items: center; gap: 9px; background: #f6f6f8; border-bottom: 1px solid #e6e6ea; }
.p-logo b { flex: 1; font-family: Lato, sans-serif; font-size: 28px; line-height: 32px; color: #000; }
.poe-mark { width: 32px; height: 28px; stroke: none; }
.burger { width: 17px; display: grid; gap: 5px; }
.burger i { height: 2px; background: #111; }
.p-scroll { flex: 1; min-height: 0; overflow: hidden; position: relative; }
.p-list { margin: -40px 10px 0 0; }
.chat { height: 67px; padding: 0 17px 0 20px; display: flex; align-items: center; gap: 13px; border-bottom: 1px solid #e6e6ea; }
.chat.cut .ct { padding-top: 20px; }
.chat > svg { stroke: none; }
.av { width: 30px; height: 30px; flex: none; display: grid; place-items: center; border: 1px solid #e6e6ea; border-radius: 8px; background: #fff; color: #111; }
.av.sm { width: 20px; height: 20px; border-radius: 5px; }
.ct { flex: 1; min-width: 0; display: grid; }
.c1 { display: flex; justify-content: space-between; line-height: 20px; }
.c1 b { font-weight: 400; font-size: 16px; }
.c1 time { font-size: 13px; line-height: 18px; color: #555; }
.c2 { font-size: 14px; line-height: 20px; color: #555; white-space: nowrap; }
.all { display: block; height: 43px; line-height: 42px; text-align: center; font-size: 14px; font-weight: 700; }
.nav { height: 63px; padding-left: 23px; display: flex; align-items: center; gap: 16px; font-weight: 600; border-top: 1px solid #e6e6ea; }
.nav.thick { height: 68px; border-top: 6px solid #e6e6ec; }
.dl { display: grid; gap: 8px; padding: 15px 16px 0; border-top: 1px solid #e6e6ea; }
.dl button { height: 40px; border: 1px solid #ccccd2; border-radius: 20px; font-size: 16px; font-weight: 600; }
.social { height: 28px; margin-top: 5px; display: flex; align-items: center; justify-content: center; gap: 8px; font-size: 15px; padding-left: 10px; }
.social.dc { margin-top: 0; padding-left: 0; }
.social b { font-family: "DejaVu Sans", sans-serif; font-size: 15px; color: #5865f2; }
.social svg { stroke-width: 1.5; }
.social .dc-mark { width: 24px; height: 20px; stroke: none; }
.links { padding: 3px 0 0 16px; font-size: 14px; line-height: 22px; color: #555; white-space: nowrap; }
.p-thumb { right: 2px; width: 6px; top: 166px; bottom: 40px; background: #e0e0e6; }

.p-main { flex: 1; min-width: 0; display: flex; flex-direction: column; }
.p-head { height: 50px; flex: none; display: flex; align-items: center; gap: 9px; padding: 0 33px; background: #f6f6f8; border-bottom: 1px solid #e6e6ea; }
.p-title { flex: 1; display: grid; line-height: 20px; }
.p-title b { font-weight: 600; font-size: 16px; }
.p-title span { display: flex; align-items: center; gap: 6px; font-size: 14px; color: #555; }
.shield { width: 14px; height: 14px; margin-left: 2px; fill: #555; stroke: none; }
.act { display: flex; align-items: center; gap: 5px; margin-left: 34px; font-size: 14px; font-weight: 700; }
.thread { flex: 1; min-height: 0; overflow: hidden; position: relative; padding-right: 10px; }
.arrow { position: absolute; right: 1px; top: 1px; width: 8px; height: 8px; }
.col { max-width: 768px; margin: 0 auto; display: flex; flex-direction: column; }
.prev { height: 22px; padding: 0 16px; text-align: right; font-size: 13px; line-height: 12px; color: #555; background: #f6f6f8; border-radius: 0 0 12px 12px; }
.mine { position: relative; align-self: flex-end; height: 60px; margin-top: 8px; padding: 8px 16px; border-radius: 12px; background: #5d5cde; display: grid; text-align: right; }
.tex { font-size: 19px; line-height: 26px; color: #c00; white-space: nowrap; font-family: "Noto Sans", "Noto Sans CJK SC", sans-serif; }
.tex span { font-size: 17px; }
.mine time { font-size: 13px; line-height: 18px; color: #c5c5f5; }
.today { position: absolute; left: -20px; top: -22px; padding: 0 9px; height: 30px; line-height: 28px; border-radius: 15px; background: #e8e8ed; font-size: 14px; color: #111; }
.bot { height: 48px; padding-top: 8px; display: flex; align-items: center; gap: 8px; font-size: 16px; }
.badge { height: 22px; padding: 0 9px; line-height: 18px; border: 1px solid #e6e6ea; border-radius: 10px; font-size: 14px; color: #4a46b8; }
.answer { min-height: 700px; padding: 9px 16px; border-radius: 12px 12px 0 0; background: #f6f6f8; font-size: 17px; line-height: 27px; }
.answer hr { border: 0; height: 1px; margin: 31px 0; background: #cbcbcf; }
.answer code { padding: 4px; border-radius: 4px; background: #e6e6eb; font-family: "Liberation Mono", monospace; font-size: 14px; line-height: 16px; font-weight: 400; }
h2 { display: flex; align-items: center; gap: 10px; padding-left: 3px; font-size: 23px; line-height: 30px; margin-bottom: 14px; }
h2 svg { width: 26px; height: 26px; }
.answer h2 code { font-size: 18px; padding: 6px 5px; }
h3 { display: flex; align-items: center; gap: 8px; padding-left: 2px; font-size: 19px; line-height: 28px; margin: 30px 0 11px; }
h3 svg { width: 22px; height: 22px; }
.code { margin-top: 16px; border: 1px solid #2a2a30; border-radius: 12px; background: #101010; color: #f5f5ef; padding: 8px; }
.code-h { height: 40px; padding: 0 9px; display: flex; justify-content: space-between; align-items: flex-start; font-size: 13px; }
.code-h b { font-weight: 700; line-height: 24px; }
.code-h button { display: flex; align-items: center; gap: 5px; height: 26px; font-size: 14px; font-weight: 600; }
.code pre { font-family: "Liberation Mono", "DejaVu Sans Mono", monospace; font-size: 13px; line-height: 20px; }
.t-thumb { right: 2px; width: 6px; top: 544px; height: 110px; background: #e0e0e6; }
.composer { width: 744px; max-width: 100%; height: 80px; margin: 8px auto 12px; padding: 10px 16px; border: 1px solid #e6e6ea; border-radius: 12px; background: #f6f6f8; }
.composer textarea { display: block; width: 100%; height: 28px; line-height: 26px; resize: none; outline: 0; font-size: 16px; }
.composer textarea::placeholder { color: #666; opacity: 1; }
.c-tools { height: 32px; display: flex; align-items: center; gap: 16px; }
.c-tools i { width: 1px; height: 24px; background: #e2e2e6; }
.c-tools .ib { color: #111; }
.c-tools .ib.pale { color: #999; }
.push { margin-left: auto; }
```
